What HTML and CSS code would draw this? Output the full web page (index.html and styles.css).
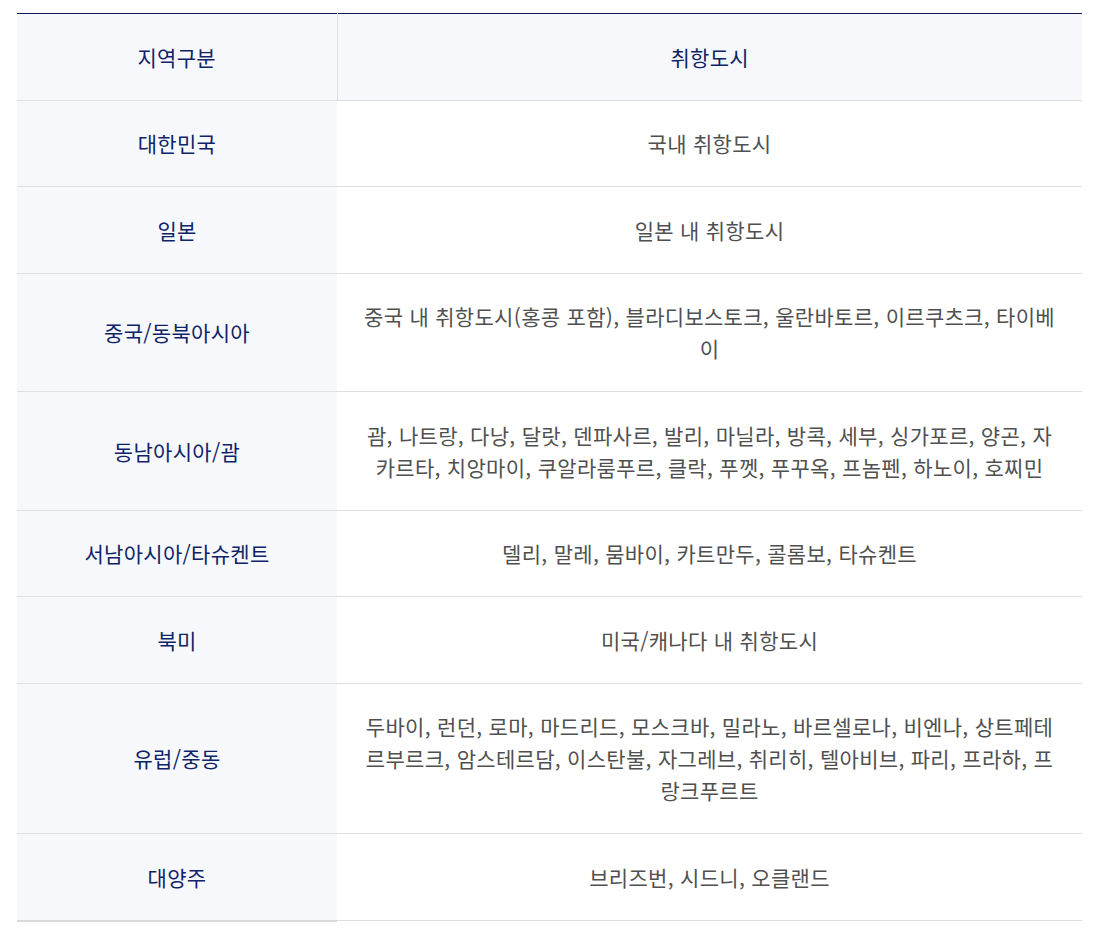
FILE: index.html
```html
<!DOCTYPE html>
<html lang="ko">
<head>
<meta charset="utf-8">
<title>취항도시</title>
<link rel="stylesheet" href="styles.css">
</head>
<body>
<div class="wrap">
<table class="city-table">
  <colgroup><col class="col-region"><col class="col-city"></colgroup>
  <thead>
    <tr><th class="h-region">지역구분</th><th class="h-city">취항도시</th></tr>
  </thead>
  <tbody>
    <tr><th>대한민국</th><td>국내 취항도시</td></tr>
    <tr><th>일본</th><td>일본 내 취항도시</td></tr>
    <tr><th>중국/동북아시아</th><td>중국 내 취항도시(홍콩 포함), 블라디보스토크, 울란바토르, 이르쿠츠크, 타이베이</td></tr>
    <tr><th>동남아시아/괌</th><td>괌, 나트랑, 다낭, 달랏, 덴파사르, 발리, 마닐라, 방콕, 세부, 싱가포르, 양곤, 자카르타, 치앙마이, 쿠알라룸푸르, 클락, 푸껫, 푸꾸옥, 프놈펜, 하노이, 호찌민</td></tr>
    <tr><th>서남아시아/타슈켄트</th><td>델리, 말레, 뭄바이, 카트만두, 콜롬보, 타슈켄트</td></tr>
    <tr><th>북미</th><td>미국/캐나다 내 취항도시</td></tr>
    <tr><th>유럽/중동</th><td>두바이, 런던, 로마, 마드리드, 모스크바, 밀라노, 바르셀로나, 비엔나, 상트페테르부르크, 암스테르담, 이스탄불, 자그레브, 취리히, 텔아비브, 파리, 프라하, 프랑크푸르트</td></tr>
    <tr class="last"><th>대양주</th><td>브리즈번, 시드니, 오클랜드</td></tr>
  </tbody>
</table>
</div>
</body>
</html>
```

FILE: styles.css
```css
html, body {
  margin: 0;
  padding: 0;
  background: #ffffff;
}
body {
  font-family: "Noto Sans CJK KR", "Noto Sans", sans-serif;
}
.wrap {
  padding: 13px 12px 0 17px;
}
.city-table {
  width: 1065px;
  border-collapse: collapse;
  border-top: 1px solid #0b1d56;
  table-layout: fixed;
}
.col-region { width: 320px; }
.city-table th,
.city-table td {
  font-size: 21px;
  line-height: 32px;
  letter-spacing: 0.3px;
  padding: 26.75px 24px;
  text-align: center;
  vertical-align: middle;
  border-bottom: 1px solid #dedfe3;
  word-break: break-all;
}
.city-table th {
  font-weight: 400;
  color: #0e2468;
  background: #f7f8fc;
}
.city-table td {
  color: #505050;
  background: #ffffff;
}
.city-table thead th {
  background: #f7f8fc;
  color: #0e2468;
}
.city-table thead .h-region {
  border-right: 1px solid #dedfe3;
}
.city-table tbody tr.last th {
  border-bottom: 2px solid #d9dade;
}
```
